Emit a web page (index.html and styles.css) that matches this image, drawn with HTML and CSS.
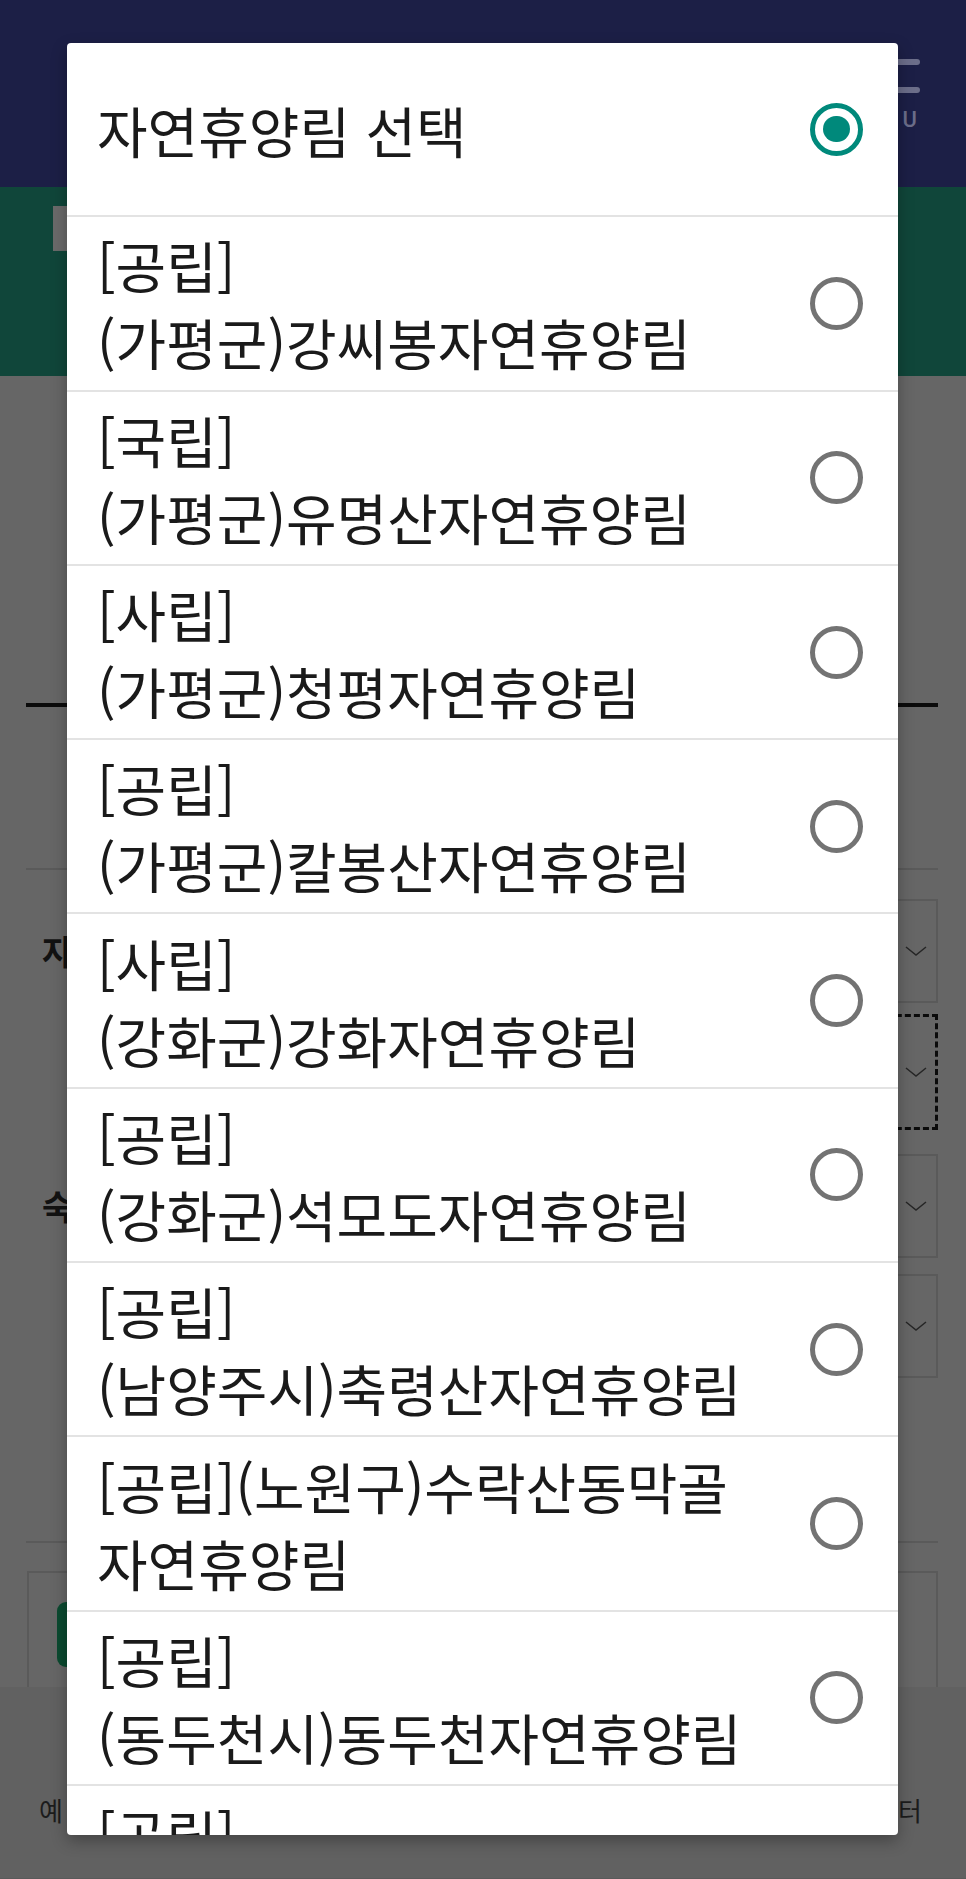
FILE: index.html
```html
<!DOCTYPE html>
<html lang="ko">
<head>
<meta charset="utf-8">
<title>자연휴양림 선택</title>
<link rel="stylesheet" href="styles.css">
</head>
<body>
<div class="page">
  <header class="top">
    <div class="menu">
      <span class="bar"></span>
      <span class="bar"></span>
      <span class="menu-label">MENU</span>
    </div>
  </header>
  <div class="band"><div class="search"></div></div>
  <main class="content">
    <div class="tabs"></div>
    <section class="filters">
      <div class="group">
        <div class="label">자연휴양림</div>
        <div class="selects">
          <div class="select"><svg class="chev" viewBox="0 0 22 10"><polyline points="1,1 11,9 21,1"/></svg></div>
          <div class="select focus"><svg class="chev" viewBox="0 0 22 10"><polyline points="1,1 11,9 21,1"/></svg></div>
        </div>
      </div>
      <div class="group">
        <div class="label">숙박시설</div>
        <div class="selects gap16">
          <div class="select"><svg class="chev" viewBox="0 0 22 10"><polyline points="1,1 11,9 21,1"/></svg></div>
          <div class="select"><svg class="chev" viewBox="0 0 22 10"><polyline points="1,1 11,9 21,1"/></svg></div>
        </div>
      </div>
    </section>
    <section class="result">
      <div class="box"><div class="btn"></div></div>
    </section>
  </main>
  <footer class="foot">
    <span>예약 및 이용 문의</span>
    <span>고객센터</span>
  </footer>
</div>

<div class="dialog">
  <div class="row title">
    <div class="text"><span class="line">자연휴양림 선택</span></div>
    <span class="radio checked"></span>
  </div>
  <div class="row"><div class="text"><span class="line">[공립]</span><span class="line">(가평군)강씨봉자연휴양림</span></div><span class="radio"></span></div>
  <div class="row"><div class="text"><span class="line">[국립]</span><span class="line">(가평군)유명산자연휴양림</span></div><span class="radio"></span></div>
  <div class="row"><div class="text"><span class="line">[사립]</span><span class="line">(가평군)청평자연휴양림</span></div><span class="radio"></span></div>
  <div class="row"><div class="text"><span class="line">[공립]</span><span class="line">(가평군)칼봉산자연휴양림</span></div><span class="radio"></span></div>
  <div class="row"><div class="text"><span class="line">[사립]</span><span class="line">(강화군)강화자연휴양림</span></div><span class="radio"></span></div>
  <div class="row"><div class="text"><span class="line">[공립]</span><span class="line">(강화군)석모도자연휴양림</span></div><span class="radio"></span></div>
  <div class="row"><div class="text"><span class="line">[공립]</span><span class="line">(남양주시)축령산자연휴양림</span></div><span class="radio"></span></div>
  <div class="row"><div class="text"><span class="line">[공립](노원구)수락산동막골</span><span class="line">자연휴양림</span></div><span class="radio"></span></div>
  <div class="row"><div class="text"><span class="line">[공립]</span><span class="line">(동두천시)동두천자연휴양림</span></div><span class="radio"></span></div>
  <div class="row"><div class="text"><span class="line">[공립]</span></div><span class="radio"></span></div>
</div>
</body>
</html>
```

FILE: styles.css
```css
* { box-sizing: border-box; }
html, body { margin: 0; padding: 0; }
body {
  width: 966px;
  min-height: 1879px;
  background: #5a5a5a;
  font-family: "Noto Sans CJK KR", "Noto Sans", sans-serif;
  overflow: hidden;
}
.page { width: 966px; }

.top {
  height: 187px;
  background: #1c1f46;
  display: flex;
  justify-content: flex-end;
  padding: 59px 46px 0 0;
}
.menu {
  width: 80px;
  display: flex;
  flex-direction: column;
  align-items: flex-end;
}
.bar {
  display: block;
  width: 50px;
  height: 6px;
  border-radius: 3px;
  background: #6c6e8a;
  margin-bottom: 22px;
}
.menu-label {
  margin-top: -8px;
  margin-right: -2px;
  font-family: "Roboto", "Liberation Sans", sans-serif;
  font-size: 22px;
  font-weight: 500;
  letter-spacing: 5px;
  line-height: 26px;
  color: #6c6e8a;
}

.band {
  height: 189px;
  background: #10463a;
  padding: 19px 0 0 53px;
}
.search {
  width: 320px;
  height: 45px;
  background: #6a6a6a;
}

.content {
  background: #666666;
  padding: 0 28px 0 26px;
}
.tabs {
  height: 331px;
  border-bottom: 4px solid #0b0b0b;
}
.filters {
  margin-top: 161px;
  border-top: 2px solid #5a5a5a;
  padding: 29px 0 0 0;
  display: flex;
  flex-direction: column;
  gap: 24px;
}
.group {
  display: grid;
  grid-template-columns: 200px 1fr;
}
.label {
  font-size: 34px;
  font-weight: 700;
  color: #121212;
  padding: 32px 0 0 16px;
  line-height: 40px;
  white-space: nowrap;
}
.selects {
  display: flex;
  flex-direction: column;
  gap: 11px;
}
.selects.gap16 { gap: 16px; }
.select {
  height: 104px;
  border: 2px solid #5a5a5a;
  display: flex;
  align-items: center;
  justify-content: flex-end;
  padding-right: 9px;
}
.select.focus {
  height: 116px;
  border: 3px dashed #0b0b0b;
  padding-right: 8px;
}
.chev {
  width: 22px;
  height: 10px;
  fill: none;
  stroke: #262626;
  stroke-width: 1.5;
}
.result {
  margin-top: 163px;
  border-top: 2px solid #5a5a5a;
  padding-top: 28px;
}
.box {
  height: 116px;
  border: 2px solid #5a5a5a;
  border-bottom: none;
  padding: 29px 0 0 28px;
  margin-left: 1px;
}
.btn {
  width: 220px;
  height: 65px;
  border-radius: 9px;
  background: #0b4a30;
}

.foot {
  height: 191px;
  background: #616161;
  display: flex;
  justify-content: space-between;
  align-items: flex-start;
  padding: 106px 44px 0 39px;
  font-size: 26px;
  line-height: 34px;
  letter-spacing: 4px;
  color: #1c1c1c;
}
.foot span:last-child { margin-right: -4px; }

.dialog {
  position: absolute;
  top: 43px;
  left: 67px;
  width: 831px;
  height: 1792px;
  background: #ffffff;
  border-radius: 4px;
  overflow: hidden;
  box-shadow: 0 6px 16px rgba(0, 0, 0, 0.3);
}
.row {
  height: 174.3px;
  border-bottom: 2px solid #e3e3e3;
  display: flex;
  align-items: center;
  justify-content: space-between;
  padding: 0 35px 0 30px;
  color: #1a1a1a;
}
.text {
  display: flex;
  flex-direction: column;
  min-height: 154px;
  justify-content: flex-start;
}
.title .text { min-height: 0; }
.line {
  display: block;
  font-size: 55px;
  line-height: 77px;
  white-space: nowrap;
}
.radio {
  flex: none;
  width: 53px;
  height: 53px;
  border-radius: 50%;
  border: 5.3px solid #737373;
  position: relative;
}
.radio.checked { border-color: #00897b; }
.radio.checked::after {
  content: "";
  position: absolute;
  left: 50%;
  top: 50%;
  width: 26.5px;
  height: 26.5px;
  margin: -13.25px 0 0 -13.25px;
  border-radius: 50%;
  background: #00897b;
}
```
